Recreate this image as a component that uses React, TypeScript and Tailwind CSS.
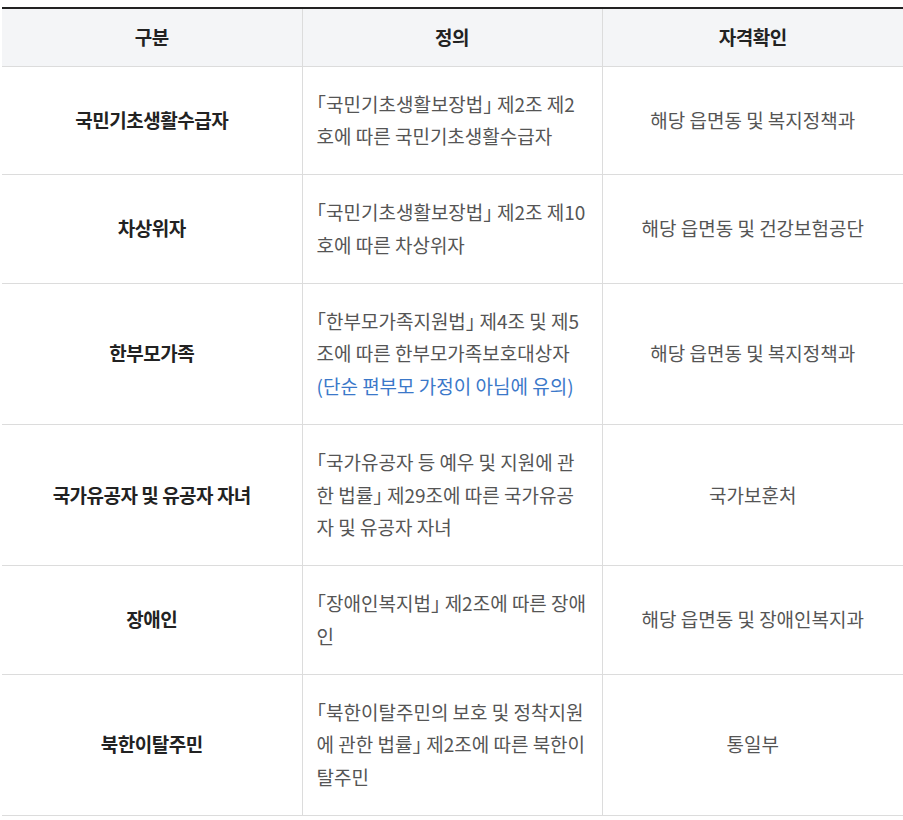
import React from "react";

type Row = {
  name: string;
  def: string;
  note?: string;
  check: string;
};

const rows: Row[] = [
  {
    name: "국민기초생활수급자",
    def: "「국민기초생활보장법」 제2조 제2호에 따른 국민기초생활수급자",
    check: "해당 읍면동 및 복지정책과",
  },
  {
    name: "차상위자",
    def: "「국민기초생활보장법」 제2조 제10호에 따른 차상위자",
    check: "해당 읍면동 및 건강보험공단",
  },
  {
    name: "한부모가족",
    def: "「한부모가족지원법」 제4조 및 제5조에 따른 한부모가족보호대상자",
    note: "(단순 편부모 가정이 아님에 유의)",
    check: "해당 읍면동 및 복지정책과",
  },
  {
    name: "국가유공자 및 유공자 자녀",
    def: "「국가유공자 등 예우 및 지원에 관한 법률」 제29조에 따른 국가유공자 및 유공자 자녀",
    check: "국가보훈처",
  },
  {
    name: "장애인",
    def: "「장애인복지법」 제2조에 따른 장애인",
    check: "해당 읍면동 및 장애인복지과",
  },
  {
    name: "북한이탈주민",
    def: "「북한이탈주민의 보호 및 정착지원에 관한 법률」 제2조에 따른 북한이탈주민",
    check: "통일부",
  },
];

const App = () => {
  return (
    <div className="min-h-screen bg-white pl-[2px] pt-[7px] font-['Noto_Sans_CJK_KR','Noto_Sans',sans-serif]">
      <table className="w-[901px] table-fixed border-collapse border-t-2 border-t-[#222] text-[19px] leading-[32.75px]">
        <colgroup>
          <col className="w-[300px]" />
          <col className="w-[300px]" />
          <col className="w-[301px]" />
        </colgroup>
        <thead>
          <tr className="bg-[#f4f5f7]">
            <th className="h-[58px] border-b border-[#dcdcdc] px-[14px] text-center font-bold tracking-[-0.5px] text-[#222]">
              구분
            </th>
            <th className="border-b border-l border-[#dcdcdc] px-[14px] text-center font-bold tracking-[-0.5px] text-[#222]">
              정의
            </th>
            <th className="border-b border-l border-[#dcdcdc] px-[14px] text-center font-bold tracking-[-0.5px] text-[#222]">
              자격확인
            </th>
          </tr>
        </thead>
        <tbody>
          {rows.map((row) => (
            <tr key={row.name}>
              <td className="border-b border-[#dcdcdc] px-[14px] py-[21px] text-center font-bold tracking-[-0.5px] text-[#222]">
                {row.name}
              </td>
              <td className="break-all border-b border-l border-[#dcdcdc] px-[14px] py-[21px] text-left text-[#555] [font-feature-settings:'halt']">
                {row.def}
                {row.note && (
                  <span className="block text-[#3b78c9]">{row.note}</span>
                )}
              </td>
              <td className="border-b border-l border-[#dcdcdc] px-[14px] py-[21px] text-center text-[#555]">
                {row.check}
              </td>
            </tr>
          ))}
        </tbody>
      </table>
    </div>
  );
};

export default App;
